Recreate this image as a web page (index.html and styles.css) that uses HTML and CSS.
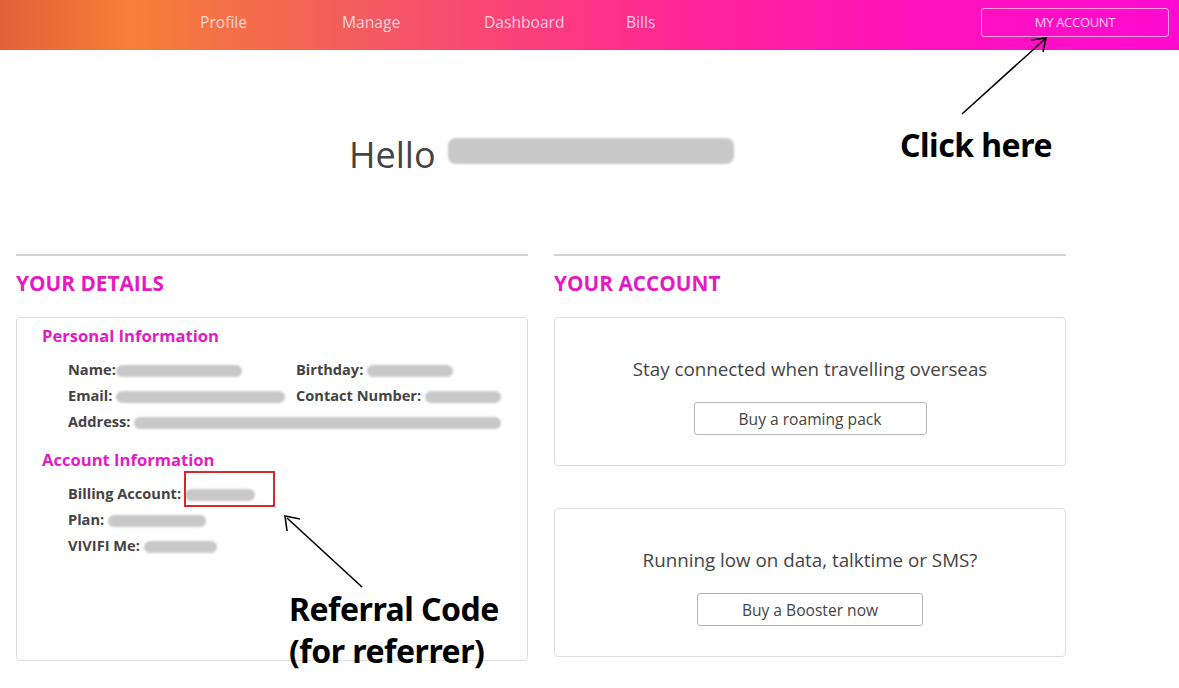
FILE: index.html
```html
<!DOCTYPE html>
<html>
<head>
<title>My Account</title>
<link rel="stylesheet" href="styles.css">
</head>
<body>
<div id="topBar">
  <div class="navLinks">
    <a class="navItem">Profile</a>
    <a class="navItem">Manage</a>
    <a class="navItem">Dashboard</a>
    <a class="navItem">Bills</a>
  </div>
  <a class="accountButton">MY ACCOUNT</a>
</div>

<div class="greeting">
  Hello <span class="blur helloBlur"></span>
</div>

<div class="columns">
  <div class="column">
    <h2 class="sectionTitle">YOUR DETAILS</h2>
    <div class="card detailsCard">
      <h3 class="subTitle">Personal Information</h3>
      <div class="detailGrid">
        <div class="detail">Name:<span class="blur" style="width:126px"></span></div>
        <div class="detail">Birthday: <span class="blur" style="width:86px"></span></div>
        <div class="detail">Email: <span class="blur" style="width:169px"></span></div>
        <div class="detail">Contact Number: <span class="blur" style="width:76px"></span></div>
        <div class="detail wide">Address: <span class="blur" style="width:367px"></span></div>
      </div>
      <h3 class="subTitle">Account Information</h3>
      <div class="detailList">
        <div class="detail">Billing Account: <span class="blur" style="width:70px"></span></div>
        <div class="detail">Plan: <span class="blur" style="width:98px"></span></div>
        <div class="detail">VIVIFI Me: <span class="blur" style="width:73px"></span></div>
      </div>
    </div>
  </div>
  <div class="column">
    <h2 class="sectionTitle">YOUR ACCOUNT</h2>
    <div class="card promoCard">
      <p class="promoText">Stay connected when travelling overseas</p>
      <button class="promoButton roaming">Buy a roaming pack</button>
    </div>
    <div class="card promoCard second">
      <p class="promoText">Running low on data, talktime or SMS?</p>
      <button class="promoButton booster">Buy a Booster now</button>
    </div>
  </div>
</div>

<!-- annotations drawn over the page -->
<div class="note clickNote">Click here</div>
<div class="note referralNote">Referral Code<br>(for referrer)</div>
<div class="redBox"></div>
<svg class="arrows" width="1179" height="688">
  <g stroke="#000" stroke-width="1.6" fill="none">
    <line x1="962" y1="114" x2="1045" y2="39" />
    <polyline points="1031,40 1046,38 1043,52" />
    <line x1="362" y1="587" x2="287" y2="518" />
    <polyline points="287,531 285,516 300,519" />
  </g>
</svg>
</body>
</html>
```

FILE: styles.css
```css
body {
  margin: 0;
  min-height: 688px;
  font-family: "Open Sans", sans-serif;
  color: #444;
  background-color: #fff;
  position: relative;
}

#topBar {
  height: 50px;
  box-sizing: border-box;
  padding-bottom: 6px;
  display: flex;
  align-items: center;
  justify-content: space-between;
  background: linear-gradient(to right, #e45f3a 0%, #f77f36 11%, #f2605a 28%, #fb3f7c 45%, #ff2598 58%, #ff14b8 75%, #ff0ad2 100%);
}

.navLinks {
  display: flex;
  padding-left: 200px;
}

.navItem {
  width: 142px;
  font-size: 15.6px;
  color: rgba(255, 235, 240, 0.85);
}

.accountButton {
  margin-right: 10px;
  width: 186px;
  height: 27px;
  line-height: 27px;
  text-align: center;
  font-size: 13px;
  letter-spacing: -0.3px;
  color: rgba(255, 235, 245, 0.9);
  border: 1px solid rgba(255, 170, 230, 0.9);
  border-radius: 3px;
}

.greeting {
  margin-top: 76px;
  padding-left: 349px;
  font-size: 36px;
  color: #444;
  display: flex;
  align-items: center;
  gap: 12px;
  height: 56px;
}

.blur {
  display: inline-block;
  height: 12px;
  background-color: #c8c8c8;
  border-radius: 6px;
  filter: blur(1px);
  vertical-align: middle;
}

.helloBlur {
  width: 286px;
  height: 26px;
  border-radius: 8px;
  margin-top: -6px;
}

.columns {
  display: flex;
  gap: 26px;
  margin-top: 72px;
  padding-left: 16px;
}

.column {
  width: 512px;
  border-top: 2px solid #d4d4d4;
}

.sectionTitle {
  margin: 13px 0 20px 0;
  font-size: 20.8px;
  font-weight: bold;
  color: #e41bc0;
}

.card {
  border: 1px solid #dedede;
  border-radius: 4px;
  box-sizing: border-box;
}

.detailsCard {
  height: 344px;
  padding: 6px 0 0 25px;
}

.subTitle {
  margin: 0 0 9px 0;
  font-size: 16.6px;
  font-weight: bold;
  color: #e41bc0;
}

.detailGrid {
  display: grid;
  grid-template-columns: 228px 220px;
  padding-left: 26px;
  margin-bottom: 14px;
}

.detailList {
  padding-left: 26px;
}

.detail {
  height: 26px;
  line-height: 26px;
  font-size: 14.6px;
  font-weight: bold;
  color: #444;
  white-space: nowrap;
}

.detail.wide {
  grid-column: span 2;
}

.promoCard {
  height: 149px;
  display: flex;
  flex-direction: column;
  align-items: center;
  padding-top: 38px;
}

.promoCard.second {
  margin-top: 42px;
}

.promoText {
  margin: 0 0 20px 0;
  font-size: 18.8px;
  color: #444;
}

.promoButton {
  height: 33px;
  background: #fff;
  border: 1px solid #b5b5b5;
  border-radius: 3px;
  font-family: "Open Sans", sans-serif;
  font-size: 15.6px;
  color: #444;
}

.promoButton.roaming {
  width: 233px;
}

.promoButton.booster {
  width: 226px;
}

.note {
  position: absolute;
  font-family: "Noto Sans", sans-serif;
  font-weight: bold;
  color: #000;
  letter-spacing: -0.5px;
}

.clickNote {
  left: 900px;
  top: 123px;
  font-size: 32px;
}

.referralNote {
  left: 289px;
  top: 588px;
  font-size: 32px;
  line-height: 42px;
}

.redBox {
  position: absolute;
  left: 184px;
  top: 471px;
  width: 87px;
  height: 32px;
  border: 2px solid #d42a2a;
}

.arrows {
  position: absolute;
  left: 0;
  top: 0;
}
```
